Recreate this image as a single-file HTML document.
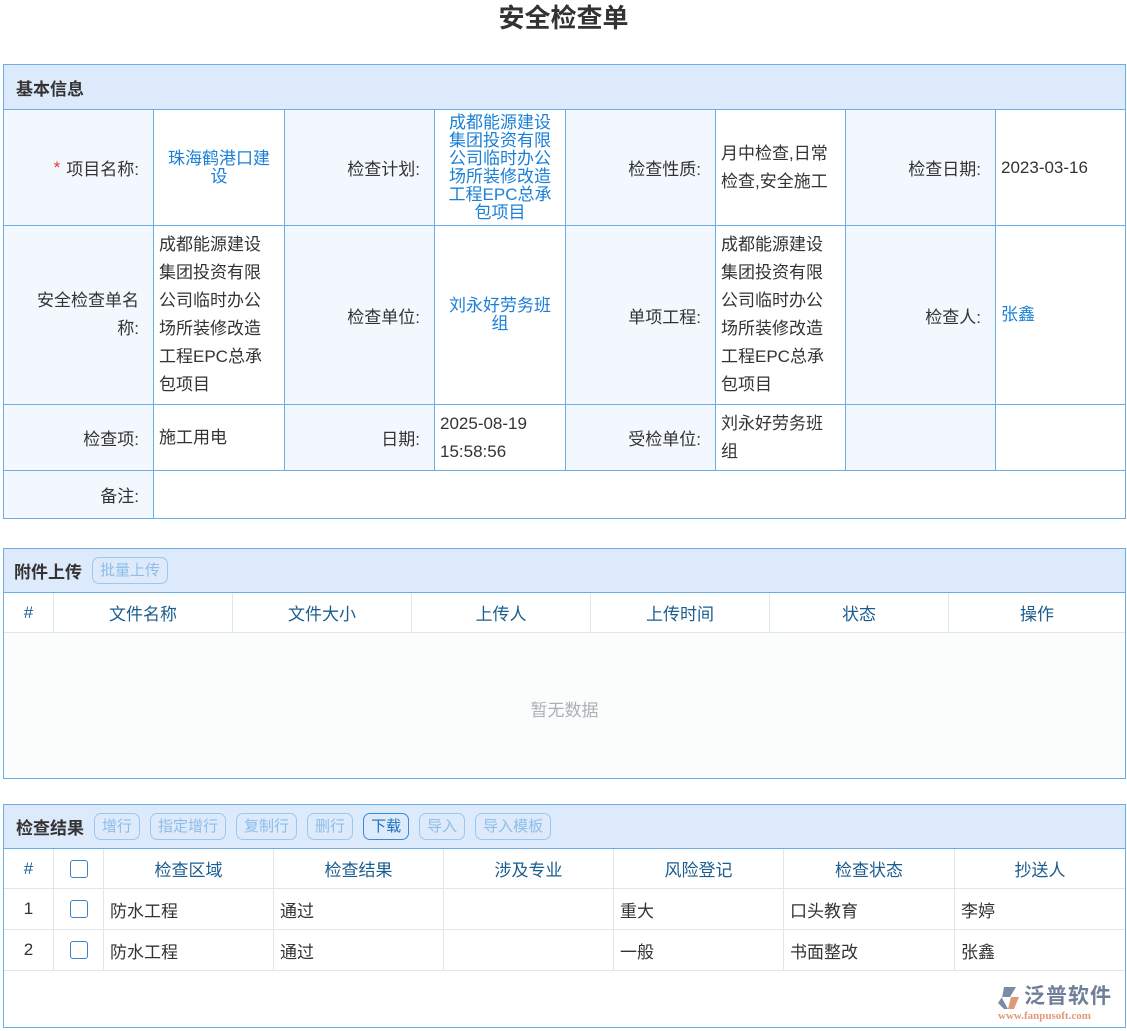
<!DOCTYPE html>
<html><head><meta charset="utf-8"><style>
*{box-sizing:border-box;margin:0;padding:0}
body{width:1127px;height:1031px;background:#fff;font-family:"Liberation Sans","Noto Sans CJK SC",sans-serif;color:#333;position:relative;overflow:hidden}
.a{position:absolute}
.title{left:0;width:1127px;top:0;text-align:center;font-size:26px;font-weight:bold;line-height:36px;color:#333}
.box{border:1px solid #6aaee8}
.hd{background:#dceafb;border-bottom:1px solid #6aaee8;font-weight:bold;font-size:17px;color:#333;padding-left:12px;display:flex;align-items:center}
.c{position:absolute;border-right:1px solid #6aaee8;border-bottom:1px solid #6aaee8;display:flex;align-items:center;font-size:17px}
.l{background:#f3f8fe;justify-content:flex-end;padding-right:14px}
.v{background:#fff;padding-left:5px;padding-right:16px;line-height:28px}
.lk{color:#1a7fd6;justify-content:center;text-align:center;line-height:18px;padding:0 12px}
.btn{display:inline-block;border:1px solid #9cc8ef;border-radius:7px;color:#8ebde8;font-size:15px;font-weight:normal;height:27px;line-height:25px;padding:0 7px;margin-left:10px}
.t{position:absolute;border-right:1px solid #e0e6ea;border-bottom:1px solid #e0e6ea;display:flex;align-items:center;justify-content:center;font-size:17px;color:#1b5d8f}
.r{position:absolute;border-right:1px solid #e0e6ea;border-bottom:1px solid #e0e6ea;display:flex;align-items:center;font-size:17px;color:#333;padding-left:6px}
.cb{width:18px;height:18px;border:1.5px solid #3a83c8;border-radius:3px;background:#fff}
</style></head><body>
<div class="a title">安全检查单</div>

<div class="a box" style="left:3px;top:64px;width:1123px;height:455px"></div>
<div class="a hd" style="left:4px;top:65px;width:1121px;height:45px">基本信息</div>

<div class="c l" style="left:4px;top:110px;width:150px;height:116px"><span style="color:#e33;margin-right:6px">*</span>项目名称:</div>
<div class="c v lk" style="left:154px;top:110px;width:131px;height:116px">珠海鹤港口建设</div>
<div class="c l" style="left:285px;top:110px;width:150px;height:116px">检查计划:</div>
<div class="c v lk" style="left:435px;top:110px;width:131px;height:116px">成都能源建设集团投资有限公司临时办公场所装修改造工程EPC总承包项目</div>
<div class="c l" style="left:566px;top:110px;width:150px;height:116px">检查性质:</div>
<div class="c v" style="left:716px;top:110px;width:130px;height:116px">月中检查,日常检查,安全施工</div>
<div class="c l" style="left:846px;top:110px;width:150px;height:116px">检查日期:</div>
<div class="c v" style="left:996px;top:110px;width:130px;height:116px">2023-03-16</div>

<div class="c l" style="left:4px;top:226px;width:150px;height:179px;text-align:right;line-height:28px">安全检查单名<br>称:</div>
<div class="c v" style="left:154px;top:226px;width:131px;height:179px">成都能源建设集团投资有限公司临时办公场所装修改造工程EPC总承包项目</div>
<div class="c l" style="left:285px;top:226px;width:150px;height:179px">检查单位:</div>
<div class="c v lk" style="left:435px;top:226px;width:131px;height:179px">刘永好劳务班组</div>
<div class="c l" style="left:566px;top:226px;width:150px;height:179px">单项工程:</div>
<div class="c v" style="left:716px;top:226px;width:130px;height:179px">成都能源建设集团投资有限公司临时办公场所装修改造工程EPC总承包项目</div>
<div class="c l" style="left:846px;top:226px;width:150px;height:179px">检查人:</div>
<div class="c v" style="left:996px;top:226px;width:130px;height:179px;color:#1a7fd6">张鑫</div>

<div class="c l" style="left:4px;top:405px;width:150px;height:66px">检查项:</div>
<div class="c v" style="left:154px;top:405px;width:131px;height:66px">施工用电</div>
<div class="c l" style="left:285px;top:405px;width:150px;height:66px">日期:</div>
<div class="c v" style="left:435px;top:405px;width:131px;height:66px">2025-08-19 15:58:56</div>
<div class="c l" style="left:566px;top:405px;width:150px;height:66px">受检单位:</div>
<div class="c v" style="left:716px;top:405px;width:130px;height:66px">刘永好劳务班组</div>
<div class="c l" style="left:846px;top:405px;width:150px;height:66px"></div>
<div class="c v" style="left:996px;top:405px;width:130px;height:66px"></div>

<div class="c l" style="left:4px;top:471px;width:150px;height:47px;border-bottom:none">备注:</div>

<!-- attachments -->
<div class="a box" style="left:3px;top:548px;width:1123px;height:231px;background:#fbfdfd"></div>
<div class="a hd" style="left:4px;top:549px;width:1121px;height:44px;padding-left:10px">附件上传<span class="btn">批量上传</span></div>
<div class="t" style="left:4px;top:593px;width:50px;height:40px;background:#fff">#</div>
<div class="t" style="left:54px;top:593px;width:179px;height:40px;background:#fff">文件名称</div>
<div class="t" style="left:233px;top:593px;width:179px;height:40px;background:#fff">文件大小</div>
<div class="t" style="left:412px;top:593px;width:179px;height:40px;background:#fff">上传人</div>
<div class="t" style="left:591px;top:593px;width:179px;height:40px;background:#fff">上传时间</div>
<div class="t" style="left:770px;top:593px;width:179px;height:40px;background:#fff">状态</div>
<div class="t" style="left:949px;top:593px;width:176px;height:40px;background:#fff;border-right:none">操作</div>
<div class="a" style="left:4px;top:696px;width:1121px;text-align:center;font-size:17px;color:#aab0b6">暂无数据</div>

<!-- results -->
<div class="a box" style="left:3px;top:804px;width:1123px;height:224px"></div>
<div class="a hd" style="left:4px;top:805px;width:1121px;height:44px">检查结果<span class="btn">增行</span><span class="btn">指定增行</span><span class="btn">复制行</span><span class="btn">删行</span><span class="btn" style="color:#1a6fc0;border-color:#3a8ad6">下载</span><span class="btn">导入</span><span class="btn">导入模板</span></div>
<div class="t" style="left:4px;top:849px;width:50px;height:40px">#</div>
<div class="t" style="left:54px;top:849px;width:50px;height:40px"><div class="cb"></div></div>
<div class="t" style="left:104px;top:849px;width:170px;height:40px">检查区域</div>
<div class="t" style="left:274px;top:849px;width:170px;height:40px">检查结果</div>
<div class="t" style="left:444px;top:849px;width:170px;height:40px">涉及专业</div>
<div class="t" style="left:614px;top:849px;width:170px;height:40px">风险登记</div>
<div class="t" style="left:784px;top:849px;width:171px;height:40px">检查状态</div>
<div class="t" style="left:955px;top:849px;width:170px;height:40px;border-right:none">抄送人</div>

<div class="t" style="left:4px;top:889px;width:50px;height:41px;color:#333">1</div>
<div class="t" style="left:54px;top:889px;width:50px;height:41px"><div class="cb"></div></div>
<div class="r" style="left:104px;top:889px;width:170px;height:41px">防水工程</div>
<div class="r" style="left:274px;top:889px;width:170px;height:41px">通过</div>
<div class="r" style="left:444px;top:889px;width:170px;height:41px"></div>
<div class="r" style="left:614px;top:889px;width:170px;height:41px">重大</div>
<div class="r" style="left:784px;top:889px;width:171px;height:41px">口头教育</div>
<div class="r" style="left:955px;top:889px;width:170px;height:41px;border-right:none">李婷</div>

<div class="t" style="left:4px;top:930px;width:50px;height:41px;color:#333">2</div>
<div class="t" style="left:54px;top:930px;width:50px;height:41px"><div class="cb"></div></div>
<div class="r" style="left:104px;top:930px;width:170px;height:41px">防水工程</div>
<div class="r" style="left:274px;top:930px;width:170px;height:41px">通过</div>
<div class="r" style="left:444px;top:930px;width:170px;height:41px"></div>
<div class="r" style="left:614px;top:930px;width:170px;height:41px">一般</div>
<div class="r" style="left:784px;top:930px;width:171px;height:41px">书面整改</div>
<div class="r" style="left:955px;top:930px;width:170px;height:41px;border-right:none">张鑫</div>

<!-- logo -->
<svg class="a" style="left:997px;top:986px" width="26" height="24" viewBox="0 0 26 24"><path d="M7 1h12l-6 10H5l-4 6 6 6h4L5 12z" fill="#7a8ca8"/><path d="M14 11h8l-5 12h-6z" fill="#e0987a"/></svg>
<div class="a" style="left:1024px;top:984px;font-size:21px;font-weight:bold;color:#6f7f98;letter-spacing:1px;line-height:26px">泛普软件</div>
<div class="a" style="left:998px;top:1010px;font-size:11px;color:#e0987a;font-family:'Liberation Serif',serif;font-weight:bold;line-height:12px">www.fanpusoft.com</div>
</body></html>
